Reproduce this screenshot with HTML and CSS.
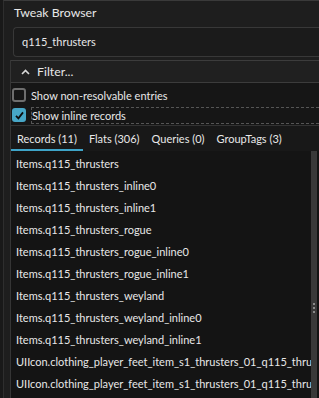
FILE: index.html
```html
<!DOCTYPE html>
<html lang="en">

<head>
    <meta charset="UTF-8">
    <meta name="viewport" content="width=device-width, initial-scale=1.0">
    <title>Tweak Browser</title>
    <link rel="stylesheet" href="styles.css">
</head>

<body>
    <div class="frame">
        <div class="title">Tweak Browser</div>
        <div class="search">q115_thrusters</div>
        <div class="section">
            <div class="filter-head">
                <svg class="chevron" width="9" height="6" viewBox="0 0 9 6">
                    <path d="M1 5 L4.5 1.5 L8 5" fill="none" stroke="#d8d8d8" stroke-width="1.6" />
                </svg>
                <span>Filter...</span>
            </div>
            <div class="options">
                <label class="option">
                    <span class="box"></span>
                    <span class="label">Show non-resolvable entries</span>
                </label>
                <label class="option focused">
                    <span class="box checked">
                        <svg width="11" height="11" viewBox="0 0 11 11">
                            <path d="M2 5.8 L4.4 8.3 L9 2.4" fill="none" stroke="#0c0c0c" stroke-width="1.8" />
                        </svg>
                    </span>
                    <span class="label">Show inline records</span>
                </label>
            </div>
            <div class="tabs">
                <span class="tab active">Records (11)</span>
                <span class="tab">Flats (306)</span>
                <span class="tab">Queries (0)</span>
                <span class="tab">GroupTags (3)</span>
            </div>
            <div class="list">
                <ul class="records">
                    <li>Items.q115_thrusters</li>
                    <li>Items.q115_thrusters_inline0</li>
                    <li>Items.q115_thrusters_inline1</li>
                    <li>Items.q115_thrusters_rogue</li>
                    <li>Items.q115_thrusters_rogue_inline0</li>
                    <li>Items.q115_thrusters_rogue_inline1</li>
                    <li>Items.q115_thrusters_weyland</li>
                    <li>Items.q115_thrusters_weyland_inline0</li>
                    <li>Items.q115_thrusters_weyland_inline1</li>
                    <li>UIIcon.clothing_player_feet_item_s1_thrusters_01_q115_thrusters</li>
                    <li>UIIcon.clothing_player_feet_item_s1_thrusters_01_q115_thrusters</li>
                </ul>
                <div class="scrollbar">
                    <div class="grip"></div>
                </div>
            </div>
        </div>
    </div>
</body>

</html>
```

FILE: styles.css
```css
* {
    margin: 0;
    padding: 0;
    box-sizing: border-box;
}

body {
    background-color: #191919;
    width: 319px;
    height: 398px;
    overflow: hidden;
    color: #e8e8e8;
    font-family: Lato, sans-serif;
    font-size: 11px;
}

.frame {
    margin-left: 3px;
    height: 398px;
    border-left: 1px solid #2e2e2e;
    border-top: 1px solid #3a3a3a;
    background-color: #1e1e1e;
    display: flex;
    flex-direction: column;
}

.title {
    height: 26px;
    line-height: 24px;
    padding-left: 10px;
    font-size: 12.3px;
}

.search {
    margin-left: 9px;
    height: 30px;
    line-height: 28px;
    padding-left: 8px;
    border: 1px solid #383838;
    border-right: none;
    border-radius: 4px 0 0 4px;
    background-color: #1b1b1b;
}

.section {
    flex: 1;
    margin-top: 3px;
    margin-left: 6px;
    border-left: 1px solid #353535;
    display: flex;
    flex-direction: column;
    min-height: 0;
}

.filter-head {
    height: 23px;
    flex-shrink: 0;
    display: flex;
    align-items: center;
    gap: 7px;
    padding-left: 10px;
    border-top: 1px solid #3c3c3c;
    border-bottom: 1px solid #3c3c3c;
    background-color: #202020;
    font-size: 12.3px;
}

.options {
    flex-shrink: 0;
    background-color: #161616;
    padding-top: 2px;
    border-bottom: 1px solid #333;
}

.option {
    display: flex;
    align-items: center;
    height: 20px;
    padding-left: 1px;
    gap: 5px;
    white-space: nowrap;
}

.box {
    flex-shrink: 0;
    width: 14px;
    height: 14px;
    border: 2px solid #6e6e6e;
    border-radius: 3px;
    display: flex;
    align-items: center;
    justify-content: center;
}

.box.checked {
    border: none;
    background-color: #47a6c6;
}

.focused .label {
    flex: 1;
    height: 17px;
    line-height: 15px;
    border: 1px dashed #555;
    border-right: none;
}

.tabs {
    flex-shrink: 0;
    display: flex;
    height: 25px;
    background-color: #181818;
    align-items: flex-end;
}

.tab {
    flex-shrink: 0;
    white-space: nowrap;
    padding: 0 6px 4px;
    border-bottom: 2px solid transparent;
}

.tab.active {
    border-bottom-color: #3ea4c8;
}

.list {
    flex: 1;
    display: flex;
    background-color: #141414;
    min-height: 0;
}

.records {
    flex: 1;
    min-width: 0;
    list-style: none;
    overflow: hidden;
    padding-top: 2px;
}

.records li {
    height: 22px;
    line-height: 22px;
    padding-left: 5px;
    white-space: nowrap;
    overflow: hidden;
}

.scrollbar {
    flex-shrink: 0;
    width: 6px;
    margin-right: 2px;
    background-color: #393939;
    position: relative;
}

.grip {
    position: absolute;
    left: 1px;
    top: 151px;
    width: 4px;
    height: 13px;
    background-image: radial-gradient(circle, #8a8a8a 1px, transparent 1.3px);
    background-size: 4px 4px;
}
```
